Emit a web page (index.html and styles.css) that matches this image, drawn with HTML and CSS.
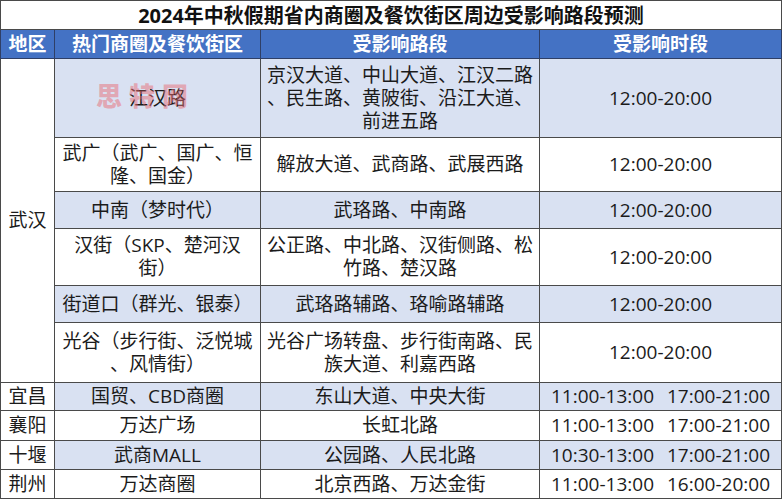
FILE: index.html
```html
<!DOCTYPE html>
<html lang="zh-CN">
<head>
<meta charset="utf-8">
<title>2024年中秋假期省内商圈及餐饮街区周边受影响路段预测</title>
<link rel="stylesheet" href="styles.css">
</head>
<body>
<div class="page">
<table class="sheet">
  <colgroup>
    <col class="c1"><col class="c2"><col class="c3"><col class="c4">
  </colgroup>
  <tr class="r-title"><td colspan="4" class="title">2024年中秋假期省内商圈及餐饮街区周边受影响路段预测</td></tr>
  <tr class="r-head">
    <th>地区</th><th>热门商圈及餐饮街区</th><th>受影响路段</th><th>受影响时段</th>
  </tr>
  <tr class="r1 band">
    <td rowspan="6" class="region">武汉</td>
    <td>江汉路</td>
    <td>京汉大道、中山大道、江汉二路<br>、民生路、黄陂街、沿江大道、<br>前进五路</td>
    <td>12:00-20:00</td>
  </tr>
  <tr class="r2">
    <td>武广（武广、国广、恒<br>隆、国金）</td>
    <td>解放大道、武商路、武展西路</td>
    <td>12:00-20:00</td>
  </tr>
  <tr class="r3 band">
    <td>中南（梦时代）</td>
    <td>武珞路、中南路</td>
    <td>12:00-20:00</td>
  </tr>
  <tr class="r4">
    <td>汉街（SKP、楚河汉<br>街）</td>
    <td>公正路、中北路、汉街侧路、松<br>竹路、楚汉路</td>
    <td>12:00-20:00</td>
  </tr>
  <tr class="r5 band">
    <td>街道口（群光、银泰）</td>
    <td>武珞路辅路、珞喻路辅路</td>
    <td>12:00-20:00</td>
  </tr>
  <tr class="r6">
    <td>光谷（步行街、泛悦城<br>、风情街）</td>
    <td>光谷广场转盘、步行街南路、民<br>族大道、利嘉西路</td>
    <td>12:00-20:00</td>
  </tr>
  <tr class="r7 band">
    <td class="region">宜昌</td>
    <td>国贸、CBD商圈</td>
    <td>东山大道、中央大街</td>
    <td class="times">11:00-13:00<span class="gap"></span>17:00-21:00</td>
  </tr>
  <tr class="r8">
    <td class="region">襄阳</td>
    <td>万达广场</td>
    <td>长虹北路</td>
    <td class="times">11:00-13:00<span class="gap"></span>17:00-21:00</td>
  </tr>
  <tr class="r9 band">
    <td class="region">十堰</td>
    <td>武商MALL</td>
    <td>公园路、人民北路</td>
    <td class="times">10:30-13:00<span class="gap"></span>17:00-21:00</td>
  </tr>
  <tr class="r10">
    <td class="region">荆州</td>
    <td>万达商圈</td>
    <td>北京西路、万达金街</td>
    <td class="times">11:00-13:00<span class="gap"></span>16:00-20:00</td>
  </tr>
</table>
<div class="watermark">思特网</div>
</div>
</body>
</html>
```

FILE: styles.css
```css
html, body {
  margin: 0;
  padding: 0;
  background: #f2f2f2;
}
.page {
  position: relative;
  width: 783px;
  height: 500px;
  overflow: hidden;
  background: #ffffff;
}
.sheet {
  border-collapse: collapse;
  table-layout: fixed;
  width: 781px;
  font-family: "Open Sans", "Noto Sans CJK SC", sans-serif;
  font-size: 19px;
  color: #1b1b1b;
}
.c1 { width: 54px; }
.c2 { width: 206px; }
.c3 { width: 279px; }
.c4 { width: 242px; }

.sheet td, .sheet th {
  border: 1px solid #4a4a4a;
  padding: 0;
  text-align: center;
  vertical-align: middle;
  line-height: 23px;
  white-space: nowrap;
  overflow: hidden;
}
.title {
  font-weight: 700;
  font-size: 20px;
  color: #111111;
  background: #ffffff;
}
.r-head th {
  background: #4472c4;
  color: #ffffff;
  font-weight: 700;
  font-size: 19px;
  border-color: #2f3f66;
}
.band td { background: #d9e1f2; }
.band td.region, .region { background: #ffffff; }

.r-title { height: 29px; }
.r-head { height: 29px; }
.r1 { height: 79px; }
.r2 { height: 54px; }
.r3 { height: 37px; }
.r4 { height: 57px; }
.r5 { height: 37px; }
.r6 { height: 60px; }
.r7 { height: 28px; }
.r8 { height: 30px; }
.r9 { height: 29px; }
.r10 { height: 29px; }

.gap { display: inline-block; width: 13px; }

.watermark {
  position: absolute;
  left: 96px;
  top: 80px;
  font-family: "Noto Sans CJK SC", sans-serif;
  font-weight: 900;
  font-size: 26px;
  letter-spacing: 7px;
  line-height: 30px;
  color: rgba(232, 110, 118, 0.5);
  pointer-events: none;
}
```
